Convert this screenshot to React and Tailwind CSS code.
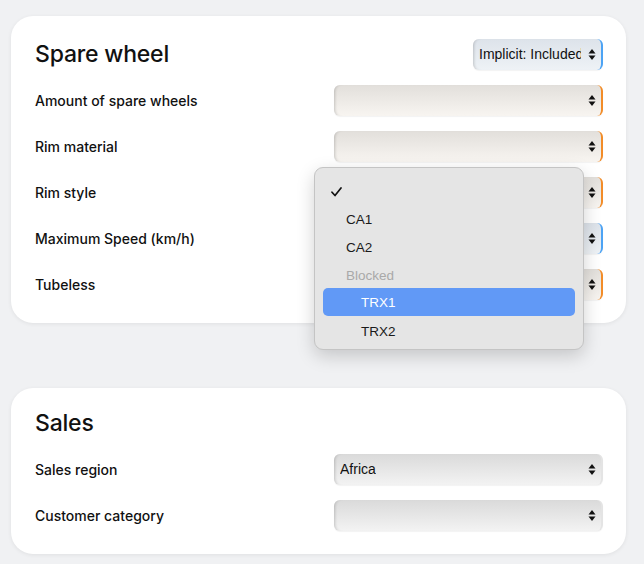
import React from "react";

const Arrows = () => (
  <svg width="8" height="13" viewBox="0 0 8 13" className="flex-shrink-0">
    <path d="M4 1 L7.5 5.5 L0.5 5.5 Z" fill="#111" />
    <path d="M4 12 L7.5 7.5 L0.5 7.5 Z" fill="#111" />
  </svg>
);

const TONES = {
  orange:
    "bg-gradient-to-b from-[#e2dfdb] to-[#f8f5f1] border-r-[2px] border-[#f28c28]",
  blue: "bg-gradient-to-b from-[#dde3ea] to-[#eef2f6] border-r-[2px] border-[#4ca3f4]",
  gray: "bg-gradient-to-b from-[#dadada] to-[#f3f3f3] border-r-[2px] border-[#e4e4e4]",
};

const Select = ({ value = "", tone = "orange", className = "", textWidth = "" }) => (
  <div
    className={`h-[31px] rounded-[6px] flex items-center justify-between gap-1 pl-[6px] pr-[5px] font-['Liberation_Sans',Arial,sans-serif] text-[14px] text-[#111] shadow-[inset_3px_0_3px_-2px_rgba(0,0,0,0.18),0_1px_1px_rgba(0,0,0,0.05)] ${TONES[tone]} ${className}`}
  >
    <span className={`overflow-hidden whitespace-nowrap ${textWidth}`}>{value}</span>
    <Arrows />
  </div>
);

const Row = ({ label, tone, value }) => (
  <div className="flex items-center justify-between h-[31px]">
    <span className="text-[14px] font-medium text-[#111]">{label}</span>
    <Select tone={tone} value={value} className="w-[269px]" />
  </div>
);

const Card = ({ title, action, children, top }) => (
  <div
    className={`bg-white rounded-[22px] w-[615px] pl-6 pr-[23px] pb-[23px] flex flex-col gap-[15px] shadow-[0_1px_4px_rgba(0,0,0,0.07)] ${top}`}
  >
    <div className="flex items-center justify-between h-[31px]">
      <h2 className="text-[23px] font-medium text-[#111] tracking-[-0.2px]">{title}</h2>
      {action}
    </div>
    {children}
  </div>
);

const MENU = [
  { label: "", check: true, indent: 0 },
  { label: "CA1", indent: 1 },
  { label: "CA2", indent: 1 },
  { label: "Blocked", indent: 1, disabled: true },
  { label: "TRX1", indent: 2, active: true },
  { label: "TRX2", indent: 2 },
];

export default function App() {
  return (
    <div className="relative min-h-screen bg-[#f0f1f3] pl-[11px] pt-4 pb-4 font-['Inter',sans-serif]">
      <Card
        title="Spare wheel"
        top="pt-[23px]"
        action={
          <Select
            tone="blue"
            value="Implicit: Included"
            textWidth="w-[102px]"
            className="w-[130px]"
          />
        }
      >
        <Row label="Amount of spare wheels" tone="orange" />
        <Row label="Rim material" tone="orange" />
        <Row label="Rim style" tone="orange" />
        <Row label="Maximum Speed (km/h)" tone="blue" />
        <Row label="Tubeless" tone="orange" />
      </Card>

      <div className="h-[65px]" />

      <Card title="Sales" top="pt-[20px]">
        <Row label="Sales region" tone="gray" value="Africa" />
        <Row label="Customer category" tone="gray" />
      </Card>

      {/* open dropdown menu */}
      <div className="absolute left-[314px] top-[167px] w-[270px] h-[183px] rounded-[9px] border border-[#c4c4c4] bg-[#e5e5e5] shadow-[0_6px_18px_rgba(0,0,0,0.18)] pt-[10px] px-[8px] font-['Liberation_Sans',Arial,sans-serif] text-[13.5px]">
        {MENU.map((m, i) => (
          <div
            key={i}
            className={`h-[28px] flex items-center rounded-[5px] ${
              m.active ? "bg-[#6199f6] text-white -mt-[2px] mb-[2px]" : m.disabled ? "text-[#a9a9a9]" : "text-[#1a1a1a]"
            } ${m.indent === 0 ? "pl-[8px]" : m.indent === 1 ? "pl-[23px]" : "pl-[38px]"}`}
          >
            {m.check ? (
              <svg width="11" height="10" viewBox="0 0 11 10">
                <path d="M1 5.2 L4 8.5 L10 1" fill="none" stroke="#111" strokeWidth="1.7" strokeLinecap="round" strokeLinejoin="round" />
              </svg>
            ) : (
              <span className={m.active ? "pt-[3px]" : ""}>{m.label}</span>
            )}
          </div>
        ))}
      </div>
    </div>
  );
}
